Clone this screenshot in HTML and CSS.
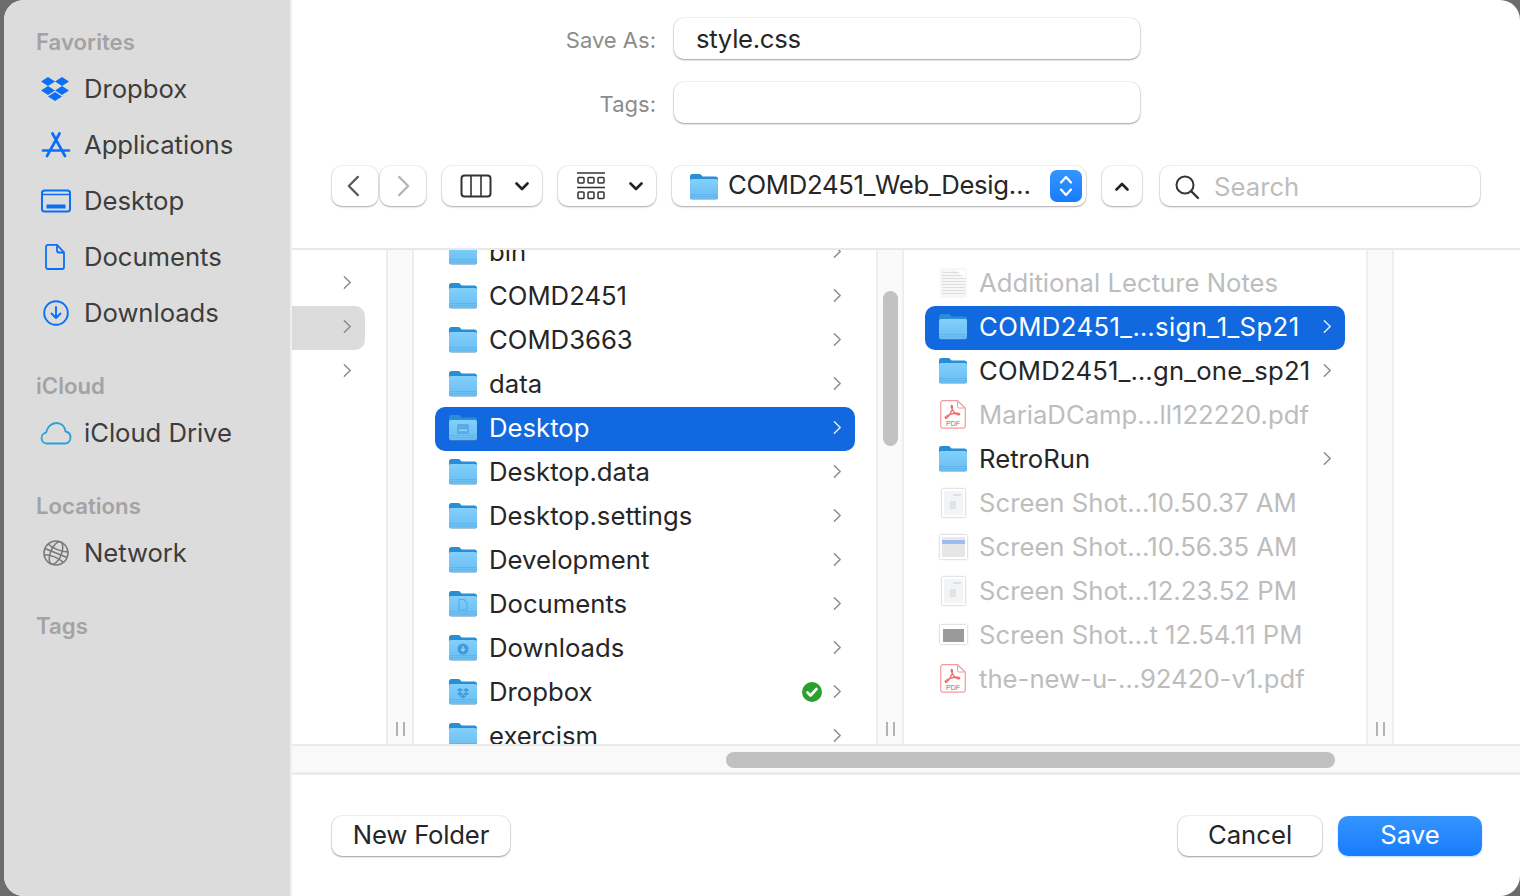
FILE: index.html
```html
<!DOCTYPE html>
<html lang="en">
<head>
    <meta charset="UTF-8">
    <meta name="viewport" content="width=device-width, initial-scale=1.0">
    <title>Save As</title>
    <link rel="stylesheet" href="styles.css">
</head>
<body>
    <svg class="defs" width="0" height="0" aria-hidden="true">
        <defs>
            <linearGradient id="folderFront" x1="0" y1="0" x2="0" y2="1">
                <stop offset="0" stop-color="#82d0fb"/>
                <stop offset="1" stop-color="#69bdf3"/>
            </linearGradient>
            <symbol id="folder" viewBox="0 0 28 27">
                <path d="M0 3.5A2.5 2.5 0 0 1 2.5 1H9c1 0 1.6.3 2.2 1l1.4 1.5h12.9A2.5 2.5 0 0 1 28 6v6H0z" fill="#2a8ed6"/>
                <path d="M0 8a2 2 0 0 1 2-2h24a2 2 0 0 1 2 2v16.5a2 2 0 0 1-2 2H2a2 2 0 0 1-2-2z" fill="#4f8fb8"/>
                <path d="M0 8a2 2 0 0 1 2-2h24a2 2 0 0 1 2 2v16a2 2 0 0 1-2 2H2a2 2 0 0 1-2-2z" fill="url(#folderFront)"/>
                <path d="M0 21.5h28M0 23.7h28" stroke="#5fb2e8" stroke-width=".8"/>
            </symbol>
            <symbol id="chevron" viewBox="0 0 10 16">
                <path d="M1.5 1.5 8 8l-6.5 6.5" fill="none" stroke="currentColor" stroke-width="1.6" stroke-linecap="round" stroke-linejoin="round"/>
            </symbol>
            <symbol id="pdf" viewBox="0 0 26 29">
                <path d="M2.5 .7h15L25.3 8v18a2.2 2.2 0 0 1-2.2 2.2H2.900A2.2 2.2 0 0 1 .7 26V2.900A2.2 2.2 0 0 1 2.5 .7z" fill="#fff" stroke="#f59a9a" stroke-width="1.2"/>
                <path d="M17.5 .9V6.5a1.5 1.5 0 0 0 1.5 1.5h6" fill="none" stroke="#f59a9a" stroke-width="1"/>
                <path d="M11.5 5.5c1.7 0 1 4.3-1.5 8.5-1.3 2.2-3.5 5-4.7 4-1-.9 2-3 8-4.5 3-.7 6.5-.7 6.5.7 0 1.3-3.5.5-5.5-1.7-1.600-1.8-4-6.5-2.800-7z" fill="none" stroke="#f06a6a" stroke-width="1.3"/>
                <text x="13" y="25.5" text-anchor="middle" class="pdf-label">PDF</text>
            </symbol>
            <symbol id="dropbox" viewBox="0 0 32 26">
                <path d="M9 1l7 4.5L9 10 2 5.5zM23 1l7 4.5L23 10l-7-4.5zM2 14.500 9 10l7 4.5L9 19zM30 14.500 23 10l-7 4.5 7 4.5zM9 20.5l7-4.5 7 4.5-7 4.5z"/>
            </symbol>
        </defs>
    </svg>

    <div class="window">
        <aside class="sidebar">
            <div class="side-title first">Favorites</div>
            <div class="side-item">
                <svg class="side-icon dropbox-blue" viewBox="1 0 32 26"><use href="#dropbox" x="0" y="0" width="32" height="26"/></svg>
                <span>Dropbox</span>
            </div>
            <div class="side-item">
                <svg class="side-icon" viewBox="0 0 32 26"><path d="M12.5 1.5 25 24M19.5 1.5 7 24M3 18.5h26" fill="none" stroke="#0a6ff5" stroke-width="2.7" stroke-linecap="round"/></svg>
                <span>Applications</span>
            </div>
            <div class="side-item">
                <svg class="side-icon" viewBox="0 0 32 26"><rect x="2" y="2.5" width="28" height="21" rx="2.5" fill="none" stroke="#0a6ff5" stroke-width="2"/><path d="M2 6.5h28" stroke="#0a6ff5" stroke-width="1.6"/><rect x="6.5" y="16.5" width="19" height="4" fill="#0a6ff5"/></svg>
                <span>Desktop</span>
            </div>
            <div class="side-item">
                <svg class="side-icon" viewBox="0 0 32 26"><path d="M8 .9h9l7 7.5v14.600a2 2 0 0 1-2 2H8a2 2 0 0 1-2-2V2.900a2 2 0 0 1 2-2z" fill="none" stroke="#0a6ff5" stroke-width="1.8" stroke-linejoin="round"/><path d="M17 1v5.5a2 2 0 0 0 2 2h5" fill="none" stroke="#0a6ff5" stroke-width="1.8"/></svg>
                <span>Documents</span>
            </div>
            <div class="side-item">
                <svg class="side-icon" viewBox="0 0 32 26"><circle cx="16" cy="13" r="11.8" fill="none" stroke="#0a6ff5" stroke-width="1.9"/><path d="M16 7v11M11.5 13.5 16 18l4.5-4.5" fill="none" stroke="#0a6ff5" stroke-width="1.9" stroke-linecap="round" stroke-linejoin="round"/></svg>
                <span>Downloads</span>
            </div>

            <div class="side-title">iCloud</div>
            <div class="side-item">
                <svg class="side-icon" viewBox="0 0 32 26"><path d="M7 23.5a5.5 5.5 0 0 1-1-10.900C7 7.5 11 3 16.5 3c5 0 8.5 3.5 9 8.5 3 .5 5 2.800 5 6 0 3.5-2.5 6-5.5 6z" fill="none" stroke="#2a9fd8" stroke-width="1.8" stroke-linejoin="round"/></svg>
                <span>iCloud Drive</span>
            </div>

            <div class="side-title">Locations</div>
            <div class="side-item">
                <svg class="side-icon" viewBox="0 0 32 26"><g fill="none" stroke="#777" stroke-width="1.5" transform="rotate(22 16 13)"><circle cx="16" cy="13" r="12"/><ellipse cx="16" cy="13" rx="5.5" ry="12"/><path d="M5 7.5c6 2.5 16 2.5 22 0M4 13h24M5.5 19c6-2.5 15-2.5 21 0"/></g></svg>
                <span>Network</span>
            </div>

            <div class="side-title">Tags</div>
        </aside>

        <main class="main">
            <section class="top">
                <div class="form-grid">
                    <label class="form-label">Save As:</label>
                    <div class="field">style.css</div>
                    <label class="form-label">Tags:</label>
                    <div class="field"></div>
                </div>
                <div class="toolbar">
                    <div class="nav-group">
                        <div class="tool-btn nav-btn back">
                            <svg class="nav-icon flip" viewBox="0 0 10 16"><use href="#chevron"/></svg>
                        </div>
                        <div class="tool-btn nav-btn forward">
                            <svg class="nav-icon" viewBox="0 0 10 16"><use href="#chevron"/></svg>
                        </div>
                    </div>
                    <div class="tool-btn view-btn">
                        <svg class="view-icon" width="32" height="24" viewBox="0 0 32 24"><rect x="1.5" y="1.5" width="29" height="21" rx="3" fill="none" stroke="#333" stroke-width="2"/><path d="M11 2v20M21 2v20" stroke="#333" stroke-width="1.6"/></svg>
                        <svg class="caret" width="14" height="9" viewBox="0 0 14 9"><path d="M1.5 1.5 7 7l5.5-5.5" fill="none" stroke="#222" stroke-width="2.6" stroke-linecap="round" stroke-linejoin="round"/></svg>
                    </div>
                    <div class="tool-btn group-btn">
                        <svg class="view-icon" width="28" height="28" viewBox="0 0 28 28"><g fill="none" stroke="#333" stroke-width="1.5"><path d="M0 1h28M0 15.5h28"/><rect x="1" y="5.5" width="6" height="5.5" rx="1"/><rect x="11" y="5.5" width="6" height="5.5" rx="1"/><rect x="21" y="5.5" width="6" height="5.5" rx="1"/><rect x="1" y="20" width="6" height="6.5" rx="1"/><rect x="11" y="20" width="6" height="6.5" rx="1"/><rect x="21" y="20" width="6" height="6.5" rx="1"/></g></svg>
                        <svg class="caret" width="14" height="9" viewBox="0 0 14 9"><path d="M1.5 1.5 7 7l5.5-5.5" fill="none" stroke="#222" stroke-width="2.6" stroke-linecap="round" stroke-linejoin="round"/></svg>
                    </div>
                    <div class="tool-btn path-btn">
                        <svg class="row-icon" viewBox="0 0 28 27"><use href="#folder"/></svg>
                        <span class="path-text">COMD2451_Web_Desig…</span>
                        <span class="stepper">
                            <svg width="14" height="26" viewBox="0 0 14 26"><path d="M2 9.5 7 4l5 5.5M2 16.5 7 22l5-5.5" fill="none" stroke="#fff" stroke-width="2.2" stroke-linecap="round" stroke-linejoin="round"/></svg>
                        </span>
                    </div>
                    <div class="tool-btn up-btn">
                        <svg width="14" height="9" viewBox="0 0 14 9"><path d="M1.5 7.5 7 2l5.5 5.5" fill="none" stroke="#222" stroke-width="2.6" stroke-linecap="round" stroke-linejoin="round"/></svg>
                    </div>
                    <div class="tool-btn search-box">
                        <svg width="26" height="26" viewBox="0 0 26 26"><circle cx="11" cy="11" r="8.5" fill="none" stroke="#333" stroke-width="2"/><path d="m17.5 17.5 6.5 6.5" stroke="#333" stroke-width="2.4" stroke-linecap="round"/></svg>
                        <span class="search-text">Search</span>
                    </div>
                </div>
            </section>

            <section class="browser">
                <div class="col col-root">
                    <div class="row"><svg class="chev" viewBox="0 0 10 16"><use href="#chevron"/></svg></div>
                    <div class="row current"><svg class="chev" viewBox="0 0 10 16"><use href="#chevron"/></svg></div>
                    <div class="row"><svg class="chev" viewBox="0 0 10 16"><use href="#chevron"/></svg></div>
                </div>
                <div class="strip"><span class="grip"></span></div>

                <div class="col col-list scrolled">
                    <div class="row"><svg class="row-icon" viewBox="0 0 28 27"><use href="#folder"/></svg><span class="name">bin</span><svg class="chev" viewBox="0 0 10 16"><use href="#chevron"/></svg></div>
                    <div class="row"><svg class="row-icon" viewBox="0 0 28 27"><use href="#folder"/></svg><span class="name">COMD2451</span><svg class="chev" viewBox="0 0 10 16"><use href="#chevron"/></svg></div>
                    <div class="row"><svg class="row-icon" viewBox="0 0 28 27"><use href="#folder"/></svg><span class="name">COMD3663</span><svg class="chev" viewBox="0 0 10 16"><use href="#chevron"/></svg></div>
                    <div class="row"><svg class="row-icon" viewBox="0 0 28 27"><use href="#folder"/></svg><span class="name">data</span><svg class="chev" viewBox="0 0 10 16"><use href="#chevron"/></svg></div>
                    <div class="row selected">
                        <svg class="row-icon" viewBox="0 0 28 27"><use href="#folder"/><rect x="8" y="10" width="12" height="10" rx="1.5" fill="#56ade8"/><rect x="10" y="15.5" width="8" height="1.6" fill="#8fd0f7"/></svg>
                        <span class="name">Desktop</span><svg class="chev" viewBox="0 0 10 16"><use href="#chevron"/></svg>
                    </div>
                    <div class="row"><svg class="row-icon" viewBox="0 0 28 27"><use href="#folder"/></svg><span class="name">Desktop.data</span><svg class="chev" viewBox="0 0 10 16"><use href="#chevron"/></svg></div>
                    <div class="row"><svg class="row-icon" viewBox="0 0 28 27"><use href="#folder"/></svg><span class="name">Desktop.settings</span><svg class="chev" viewBox="0 0 10 16"><use href="#chevron"/></svg></div>
                    <div class="row"><svg class="row-icon" viewBox="0 0 28 27"><use href="#folder"/></svg><span class="name">Development</span><svg class="chev" viewBox="0 0 10 16"><use href="#chevron"/></svg></div>
                    <div class="row">
                        <svg class="row-icon" viewBox="0 0 28 27"><use href="#folder"/><path d="M10 9.5h5l3 3v7.5h-8z" fill="none" stroke="#56ade8" stroke-width="1.1"/></svg>
                        <span class="name">Documents</span><svg class="chev" viewBox="0 0 10 16"><use href="#chevron"/></svg>
                    </div>
                    <div class="row">
                        <svg class="row-icon" viewBox="0 0 28 27"><use href="#folder"/><circle cx="14" cy="15" r="5.5" fill="#3f9cdc"/><path d="M14 12v5M12 15l2 2 2-2" fill="none" stroke="#9fdaf9" stroke-width="1.2"/></svg>
                        <span class="name">Downloads</span><svg class="chev" viewBox="0 0 10 16"><use href="#chevron"/></svg>
                    </div>
                    <div class="row">
                        <svg class="row-icon" viewBox="0 0 28 27"><use href="#folder"/><use href="#dropbox" x="7" y="9.5" width="14" height="11.4" fill="#3f9cdc"/></svg>
                        <span class="name">Dropbox</span>
                        <svg class="badge" width="20" height="20" viewBox="0 0 20 20"><circle cx="10" cy="10" r="10" fill="#2aa02f"/><path d="m5.5 10.5 3 3 6-6.5" fill="none" stroke="#fff" stroke-width="2.6" stroke-linecap="round" stroke-linejoin="round"/></svg>
                        <svg class="chev" viewBox="0 0 10 16"><use href="#chevron"/></svg>
                    </div>
                    <div class="row"><svg class="row-icon" viewBox="0 0 28 27"><use href="#folder"/></svg><span class="name">exercism</span><svg class="chev" viewBox="0 0 10 16"><use href="#chevron"/></svg></div>
                </div>
                <div class="strip"><span class="scroll-thumb"></span><span class="grip"></span></div>

                <div class="col col-list">
                    <div class="row off">
                        <span class="file-icon"><span class="thumb doc"></span></span>
                        <span class="name">Additional Lecture Notes</span>
                    </div>
                    <div class="row selected"><svg class="row-icon" viewBox="0 0 28 27"><use href="#folder"/></svg><span class="name loose">COMD2451_…sign_1_Sp21</span><svg class="chev" viewBox="0 0 10 16"><use href="#chevron"/></svg></div>
                    <div class="row"><svg class="row-icon" viewBox="0 0 28 27"><use href="#folder"/></svg><span class="name slight">COMD2451_…gn_one_sp21</span><svg class="chev" viewBox="0 0 10 16"><use href="#chevron"/></svg></div>
                    <div class="row off">
                        <span class="file-icon"><svg width="26" height="29" viewBox="0 0 26 29"><use href="#pdf"/></svg></span>
                        <span class="name">MariaDCamp…ll122220.pdf</span>
                    </div>
                    <div class="row"><svg class="row-icon" viewBox="0 0 28 27"><use href="#folder"/></svg><span class="name">RetroRun</span><svg class="chev" viewBox="0 0 10 16"><use href="#chevron"/></svg></div>
                    <div class="row off">
                        <span class="file-icon"><span class="thumb tall"></span></span>
                        <span class="name">Screen Shot…10.50.37 AM</span>
                    </div>
                    <div class="row off">
                        <span class="file-icon"><span class="thumb wide bluebar"></span></span>
                        <span class="name">Screen Shot…10.56.35 AM</span>
                    </div>
                    <div class="row off">
                        <span class="file-icon"><span class="thumb tall"></span></span>
                        <span class="name">Screen Shot…12.23.52 PM</span>
                    </div>
                    <div class="row off">
                        <span class="file-icon"><span class="thumb wide darkbox"></span></span>
                        <span class="name">Screen Shot…t 12.54.11 PM</span>
                    </div>
                    <div class="row off">
                        <span class="file-icon"><svg width="26" height="29" viewBox="0 0 26 29"><use href="#pdf"/></svg></span>
                        <span class="name">the-new-u-…92420-v1.pdf</span>
                    </div>
                </div>
                <div class="strip"><span class="grip"></span></div>
                <div class="col col-empty"></div>
            </section>

            <div class="hscroll"><span class="hscroll-thumb"></span></div>

            <footer class="footer">
                <button class="btn new-folder">New Folder</button>
                <div class="footer-right">
                    <button class="btn action">Cancel</button>
                    <button class="btn action primary">Save</button>
                </div>
            </footer>
        </main>
    </div>
</body>
</html>
```

FILE: styles.css
```css
* {
    box-sizing: border-box;
}

html, body {
    height: 100%;
}

body {
    margin: 0;
    padding-left: 4px;
    background-color: #6c6c6c;
    font-family: Inter, "Noto Sans", "Liberation Sans", sans-serif;
    font-size: 25.7px;
    color: #262626;
    overflow: hidden;
}

.defs {
    position: absolute;
}

.pdf-label {
    font-family: "Liberation Sans", sans-serif;
    font-size: 7px;
    fill: #777;
}

.window {
    display: flex;
    width: 1516px;
    height: 896px;
    border-radius: 20px;
    overflow: hidden;
    background-color: #fff;
}

/* sidebar */

.sidebar {
    flex: 0 0 288px;
    padding: 28px 0 0 32px;
    background-color: #dcdcdc;
    border-right: 2px solid #efefef;
    color: #3d3d3d;
}

.side-title {
    height: 28px;
    line-height: 28px;
    margin-top: 31px;
    margin-bottom: 5px;
    font-size: 22.2px;
    font-weight: 600;
    color: #a3a3a3;
}

.side-title.first {
    margin-top: 0;
}

.side-item {
    display: flex;
    align-items: center;
    gap: 12px;
    height: 56px;
    padding-left: 4px;
}

.side-item span {
    padding-bottom: 2px;
    letter-spacing: -0.05px;
}

.side-icon {
    width: 32px;
    height: 26px;
    flex: none;
    overflow: visible;
}

.dropbox-blue {
    fill: #0a6ff5;
}

/* save as form and toolbar */

.main {
    flex: 1;
    min-width: 0;
    display: flex;
    flex-direction: column;
}

.top {
    height: 250px;
    flex: none;
    border-bottom: 2px solid #e8e8e8;
    padding-top: 18px;
}

.form-grid {
    display: grid;
    grid-template-columns: 364px 466px;
    grid-auto-rows: 41px;
    column-gap: 18px;
    row-gap: 23px;
}

.form-label {
    align-self: center;
    padding-top: 2px;
    text-align: right;
    font-size: 22px;
    color: #8c8c8c;
}

.field {
    display: flex;
    align-items: center;
    padding-left: 22px;
    letter-spacing: -0.3px;
    background-color: #fff;
    border-radius: 10px;
    box-shadow: 0 1px 2px rgba(0, 0, 0, 0.35), 0 0 0 1px rgba(0, 0, 0, 0.05);
}

.toolbar {
    display: flex;
    gap: 16px;
    margin-top: 43px;
    padding-left: 40px;
}

.tool-btn {
    display: flex;
    align-items: center;
    height: 40px;
    background-color: #fff;
    border-radius: 10px;
    box-shadow: 0 1px 2px rgba(0, 0, 0, 0.3), 0 0 0 1px rgba(0, 0, 0, 0.05);
}

.nav-group {
    display: flex;
    gap: 2px;
}

.nav-btn {
    width: 46px;
    justify-content: center;
    color: #5c5c5c;
}

.nav-btn.back {
    padding-right: 5px;
}

.nav-btn.forward {
    padding-left: 2px;
    color: #b5b5b5;
}

.nav-icon {
    width: 14px;
    height: 24px;
}

.flip {
    transform: scaleX(-1);
}

.view-btn {
    width: 100px;
    padding-left: 18px;
}

.group-btn {
    width: 98px;
    padding-left: 19px;
}

.caret {
    margin-left: auto;
    margin-right: 13px;
}

.path-btn {
    width: 414px;
    padding-left: 18px;
}

.path-text {
    margin-left: 10px;
    padding-bottom: 3px;
    letter-spacing: -0.3px;
    white-space: nowrap;
}

.stepper {
    display: flex;
    align-items: center;
    justify-content: center;
    width: 32px;
    height: 32px;
    margin-left: auto;
    margin-right: 4px;
    border-radius: 7px;
    background: linear-gradient(180deg, #3595ff, #177cfc);
}

.up-btn {
    width: 40px;
    justify-content: center;
}

.search-box {
    width: 320px;
    margin-left: 2px;
    padding-left: 14px;
    padding-top: 1px;
}

.search-text {
    margin-left: 14px;
    color: #bdbdbd;
}

/* column browser */

.browser {
    height: 494px;
    flex: none;
    display: flex;
    overflow: hidden;
}

.col {
    flex: none;
    padding-top: 12px;
    overflow: hidden;
}

.col-root {
    width: 94px;
}

.col-list {
    width: 462px;
}

.col-list.scrolled {
    padding-top: 0;
}

.col-list.scrolled .row:first-child {
    margin-top: -19px;
}

.col-empty {
    flex: 1;
}

.row {
    display: flex;
    align-items: center;
    height: 44px;
    margin: 0 21px;
    padding: 0 13px 3px 14px;
    border-radius: 10px;
    white-space: nowrap;
}

.col-root .row {
    justify-content: flex-end;
    margin: 0 21px 0 0;
    padding-right: 13px;
}

.row.current {
    background-color: #dcdcdc;
    border-radius: 0 10px 10px 0;
}

.row.selected {
    background-color: #1268de;
    color: #fff;
}

.row.selected .chev {
    color: #e4eefc;
}

.row.off {
    color: #bdbdbd;
}

.row-icon {
    flex: none;
    width: 28px;
    height: 27px;
}

.file-icon {
    flex: none;
    display: flex;
    align-items: center;
    justify-content: center;
    width: 28px;
    height: 30px;
}

.name {
    margin-left: 12px;
}

.name.loose {
    letter-spacing: 0.4px;
}

.name.slight {
    letter-spacing: 0.2px;
}

.chev {
    flex: none;
    width: 9px;
    height: 15px;
    margin-left: auto;
    color: #8a8a8a;
}

.badge {
    flex: none;
    margin-left: auto;
    margin-right: 11px;
}

.badge + .chev {
    margin-left: 0;
}

.thumb {
    display: block;
    background-color: #f4f4f4;
    border: 2px solid #fff;
    box-shadow: 0 0 2px rgba(0, 0, 0, 0.35);
}

.thumb.doc {
    width: 25px;
    height: 28px;
    border-width: 1px 1px 3px;
    border-color: #f6f6f6;
    background:
        linear-gradient(225deg, #fff 0 6px, transparent 6px),
        repeating-linear-gradient(180deg, #f7f7f7 0 2px, #dedede 2px 3px);
    box-shadow: 0 0 1px rgba(0, 0, 0, 0.2);
}

.thumb.tall {
    width: 23px;
    height: 28px;
    background:
        linear-gradient(#d5e2f4, #d5e2f4) 9px 3px / 8px 2px no-repeat,
        linear-gradient(#e2e2e2, #e2e2e2) 6px 10px / 6px 8px no-repeat,
        #f3f4f6;
}

.thumb.wide {
    width: 27px;
    height: 24px;
}

.thumb.bluebar {
    background: linear-gradient(180deg, #e9e9e9 0 3px, #9dbdf0 3px 7px, #e6e6e6 7px);
}

.thumb.darkbox {
    height: 19px;
    border-width: 4px 3px 2px;
    background-color: #9a9a9a;
}

.strip {
    flex: none;
    width: 28px;
    display: flex;
    flex-direction: column;
    align-items: center;
    padding-bottom: 8px;
    background-color: #fafafa;
    border-left: 2px solid #eeeeee;
    border-right: 2px solid #eeeeee;
}

.scroll-thumb {
    width: 15px;
    height: 155px;
    margin-top: 41px;
    border-radius: 8px;
    background-color: #c2c2c2;
}

.grip {
    width: 9px;
    height: 14px;
    margin-top: auto;
    border-left: 2px solid #b3b3b3;
    border-right: 2px solid #b3b3b3;
}

.hscroll {
    height: 31px;
    flex: none;
    padding: 6px 0 0 434px;
    background-color: #f9f9f9;
    border-top: 2px solid #eaeaea;
    border-bottom: 3px solid #ebebeb;
}

.hscroll-thumb {
    display: block;
    width: 609px;
    height: 16px;
    border-radius: 8px;
    background-color: #c0c0c0;
}

/* bottom buttons */

.footer {
    flex: 1;
    display: flex;
    justify-content: space-between;
    align-items: flex-start;
    padding: 41px 38px 0 40px;
}

.footer-right {
    display: flex;
    gap: 16px;
}

.btn {
    height: 40px;
    padding: 0 0 3px;
    border: none;
    border-radius: 10px;
    background-color: #fff;
    font-family: inherit;
    font-size: 25.7px;
    color: #262626;
    box-shadow: 0 1px 2px rgba(0, 0, 0, 0.35), 0 0 0 1px rgba(0, 0, 0, 0.06);
}

.new-folder {
    width: 178px;
    letter-spacing: -0.2px;
}

.action {
    width: 144px;
}

.primary {
    background: linear-gradient(180deg, #3595ff, #177cfc);
    color: #fff;
    box-shadow: 0 1px 2px rgba(23, 124, 252, 0.3);
}
```
